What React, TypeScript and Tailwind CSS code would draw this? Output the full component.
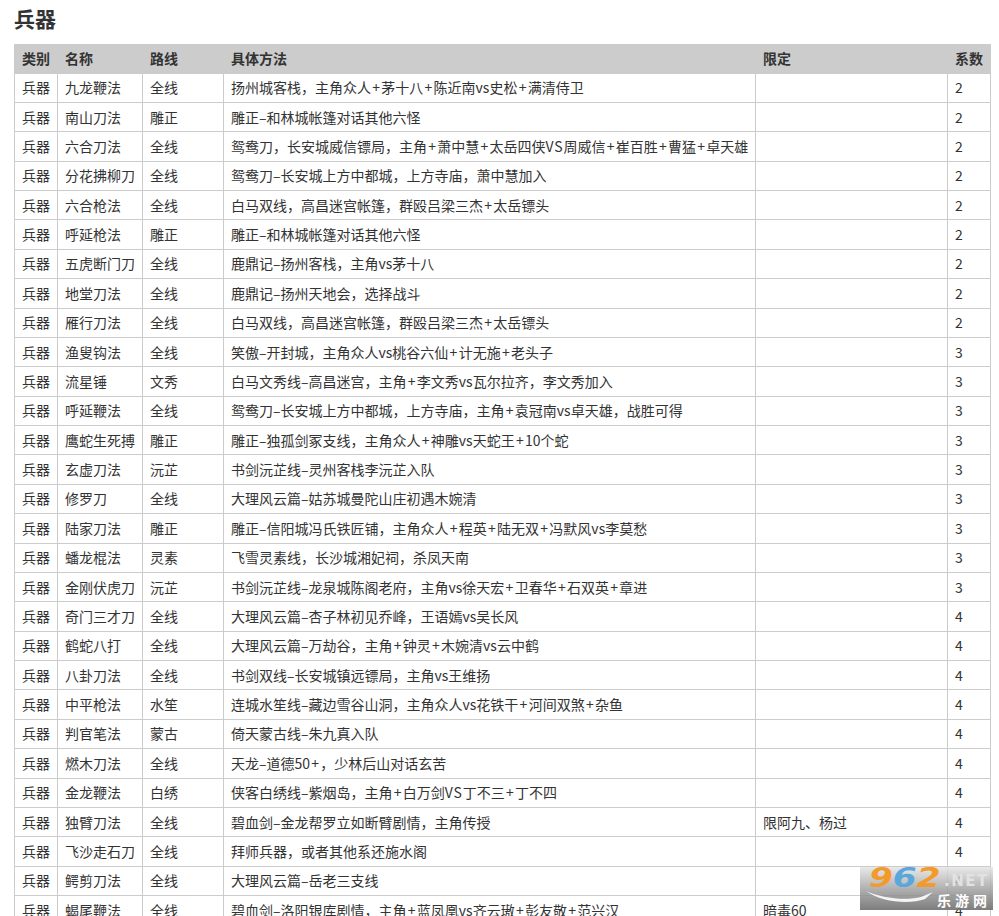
const font = "font-['Noto_Sans_CJK_SC','Liberation_Sans',sans-serif]";

const rows = [
  ['九龙鞭法', '全线', '扬州城客栈，主角众人+茅十八+陈近南vs史松+满清侍卫', '', '2'],
  ['南山刀法', '雕正', '雕正–和林城帐篷对话其他六怪', '', '2'],
  ['六合刀法', '全线', '鸳鸯刀，长安城威信镖局，主角+萧中慧+太岳四侠VS周威信+崔百胜+曹猛+卓天雄', '', '2'],
  ['分花拂柳刀', '全线', '鸳鸯刀–长安城上方中都城，上方寺庙，萧中慧加入', '', '2'],
  ['六合枪法', '全线', '白马双线，高昌迷宫帐篷，群殴吕梁三杰+太岳镖头', '', '2'],
  ['呼延枪法', '雕正', '雕正–和林城帐篷对话其他六怪', '', '2'],
  ['五虎断门刀', '全线', '鹿鼎记–扬州客栈，主角vs茅十八', '', '2'],
  ['地堂刀法', '全线', '鹿鼎记–扬州天地会，选择战斗', '', '2'],
  ['雁行刀法', '全线', '白马双线，高昌迷宫帐篷，群殴吕梁三杰+太岳镖头', '', '2'],
  ['渔叟钩法', '全线', '笑傲–开封城，主角众人vs桃谷六仙+计无施+老头子', '', '3'],
  ['流星锤', '文秀', '白马文秀线–高昌迷宫，主角+李文秀vs瓦尔拉齐，李文秀加入', '', '3'],
  ['呼延鞭法', '全线', '鸳鸯刀–长安城上方中都城，上方寺庙，主角+袁冠南vs卓天雄，战胜可得', '', '3'],
  ['鹰蛇生死搏', '雕正', '雕正–独孤剑冢支线，主角众人+神雕vs天蛇王+10个蛇', '', '3'],
  ['玄虚刀法', '沅芷', '书剑沅芷线–灵州客栈李沅芷入队', '', '3'],
  ['修罗刀', '全线', '大理风云篇–姑苏城曼陀山庄初遇木婉清', '', '3'],
  ['陆家刀法', '雕正', '雕正–信阳城冯氏铁匠铺，主角众人+程英+陆无双+冯默风vs李莫愁', '', '3'],
  ['蟠龙棍法', '灵素', '飞雪灵素线，长沙城湘妃祠，杀凤天南', '', '3'],
  ['金刚伏虎刀', '沅芷', '书剑沅芷线–龙泉城陈阁老府，主角vs徐天宏+卫春华+石双英+章进', '', '3'],
  ['奇门三才刀', '全线', '大理风云篇–杏子林初见乔峰，王语嫣vs吴长风', '', '4'],
  ['鹤蛇八打', '全线', '大理风云篇–万劫谷，主角+钟灵+木婉清vs云中鹤', '', '4'],
  ['八卦刀法', '全线', '书剑双线–长安城镇远镖局，主角vs王维扬', '', '4'],
  ['中平枪法', '水笙', '连城水笙线–藏边雪谷山洞，主角众人vs花铁干+河间双煞+杂鱼', '', '4'],
  ['判官笔法', '蒙古', '倚天蒙古线–朱九真入队', '', '4'],
  ['燃木刀法', '全线', '天龙–道德50+，少林后山对话玄苦', '', '4'],
  ['金龙鞭法', '白绣', '侠客白绣线–紫烟岛，主角+白万剑VS丁不三+丁不四', '', '4'],
  ['独臂刀法', '全线', '碧血剑–金龙帮罗立如断臂剧情，主角传授', '限阿九、杨过', '4'],
  ['飞沙走石刀', '全线', '拜师兵器，或者其他系还施水阁', '', '4'],
  ['鳄剪刀法', '全线', '大理风云篇–岳老三支线', '', '4'],
  ['蝎尾鞭法', '全线', '碧血剑–洛阳银库剧情，主角+蓝凤凰vs齐云璈+彭友敬+范兴汉', '暗毒60', '4'],
];

// + and VS run wider in the original font
const Method = ({ text }: { text: string }) => (
  <>
    {text.split(/(\+|VS)/).map((part, i) =>
      part === '+' ? (
        <span key={i} className="px-[1.25px]">+</span>
      ) : part === 'VS' ? (
        <span key={i} className="tracking-[0.8px]">VS</span>
      ) : (
        part
      ),
    )}
  </>
);

const Cell = ({ children }: { children?: React.ReactNode }) => (
  <td className="overflow-hidden border border-[#cccccc] px-[7px] py-0 align-middle whitespace-nowrap">{children}</td>
);

export default function App() {
  return (
    <div className={`relative h-[916px] w-[999px] overflow-hidden bg-white text-[14px] text-[#333333] ${font}`}>
      <div className="pt-[4px] pl-[14px]">
        <h2 className="h-[40px] text-[21px] leading-[28px] font-bold">兵器</h2>
        <table className="w-[976px] table-fixed border-collapse">
          <colgroup>
            <col className="w-[43px]" />
            <col className="w-[85px]" />
            <col className="w-[81px]" />
            <col className="w-[532px]" />
            <col className="w-[192px]" />
            <col className="w-[43px]" />
          </colgroup>
          <thead>
            <tr className="h-[28.5px] bg-[#cccccc] text-left">
              {['类别', '名称', '路线', '具体方法', '限定', '系数'].map((t) => (
                <th key={t} className="border border-[#cccccc] px-[7px] py-0 font-bold">{t}</th>
              ))}
            </tr>
          </thead>
          <tbody>
            {rows.map((r) => (
              <tr key={r[0]} className="h-[29.38px]">
                <Cell>兵器</Cell>
                {r.map((c, i) => (
                  <Cell key={i}>
                    <Method text={c} />
                  </Cell>
                ))}
              </tr>
            ))}
          </tbody>
        </table>
      </div>
      {/* 水印 */}
      <div className="absolute top-[867px] left-[860px] h-[43px] w-[133px] bg-gradient-to-b from-[#e4e4e4]/80 to-[#6f6f6f]/90">
        <div className="absolute top-[-6px] left-[9px] origin-left scale-x-[1.27] font-['DejaVu_Sans'] text-[27px] leading-[34px] font-bold text-[#f39a2b] italic">
          9<span className="text-[#5aa7dc]">6</span>2
        </div>
        <div className="absolute top-[6px] left-[84px] font-['DejaVu_Sans'] text-[15px] leading-[16px] font-bold tracking-[1.5px] text-[#e2e2e2]">.NET</div>
        <div className="absolute top-[25px] left-[77px] text-[14px] leading-[16px] font-bold tracking-[4px] text-white">乐游网</div>
        <svg className="absolute top-[22px] left-[5px]" width="70" height="14" viewBox="0 0 70 14">
          <path d="M1 2 C16 9 40 12 56 8 L68 3 L60 10 C44 16 16 13 1 2 Z" fill="#f4f4f4" />
        </svg>
      </div>
    </div>
  );
}
